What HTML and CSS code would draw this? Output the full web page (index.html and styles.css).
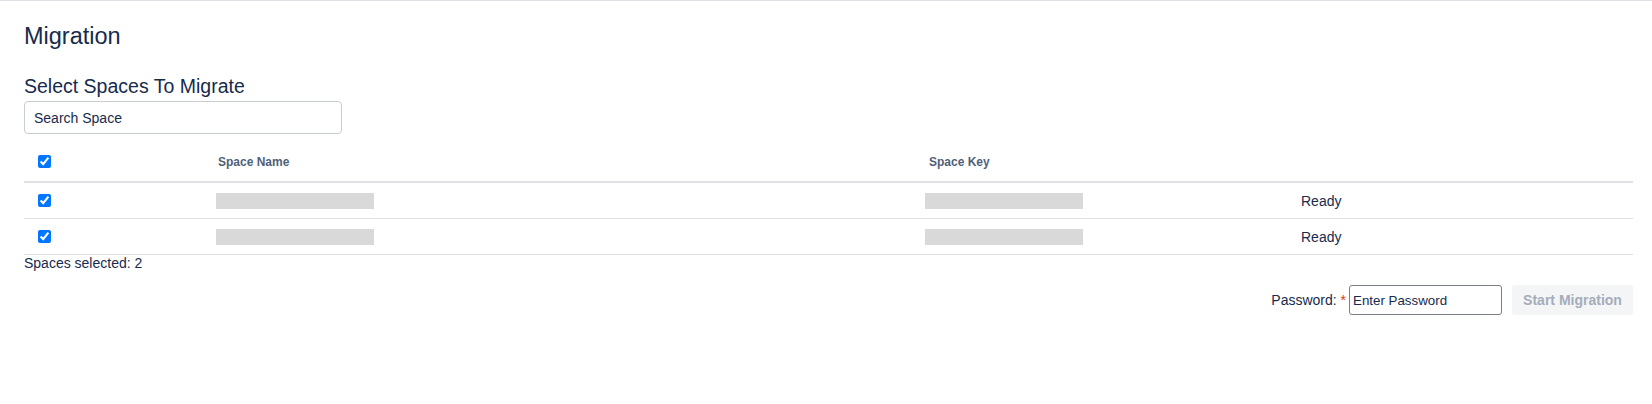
FILE: index.html
```html
<!DOCTYPE html>
<html lang="en">
<head>
<meta charset="utf-8">
<title>Migration</title>
<link rel="stylesheet" href="styles.css">
</head>
<body>
<div class="page">
  <h1 class="title">Migration</h1>
  <h2 class="subtitle">Select Spaces To Migrate</h2>
  <input class="search" type="text" placeholder="Search Space">
  <div class="table">
    <div class="row head">
      <div class="cell"><input class="cb" type="checkbox" checked></div>
      <div class="cell th th-name">Space Name</div>
      <div class="cell th th-key">Space Key</div>
      <div class="cell"></div>
    </div>
    <div class="row">
      <div class="cell"><input class="cb" type="checkbox" checked></div>
      <div class="cell"><span class="bar"></span></div>
      <div class="cell"><span class="bar"></span></div>
      <div class="cell status">Ready</div>
    </div>
    <div class="row">
      <div class="cell"><input class="cb" type="checkbox" checked></div>
      <div class="cell"><span class="bar"></span></div>
      <div class="cell"><span class="bar"></span></div>
      <div class="cell status">Ready</div>
    </div>
  </div>
  <div class="summary">Spaces selected: 2</div>
  <div class="actions">
    <label class="pw-label">Password: <span class="req">*</span></label>
    <input class="pw" type="password" placeholder="Enter Password">
    <button class="start" disabled>Start Migration</button>
  </div>
</div>
</body>
</html>
```
FILE: styles.css
```css
html, body {
  margin: 0;
  padding: 0;
  background: #ffffff;
}
body {
  font-family: "Liberation Sans", Arial, Helvetica, sans-serif;
  color: #172b4d;
  font-size: 14px;
}
.page {
  border-top: 1px solid #dfe1e6;
  padding: 21px 19px 0 24px;
}
.title {
  margin: 0;
  font-size: 23.5px;
  line-height: 28px;
  font-weight: normal;
  color: #172b4d;
}
.subtitle {
  margin: 25px 0 0;
  font-size: 19.5px;
  line-height: 23px;
  font-weight: normal;
  color: #172b4d;
}
.search {
  display: block;
  box-sizing: border-box;
  margin: 3px 0 0;
  width: 318px;
  height: 33px;
  padding: 0 9px;
  border: 1px solid #c8ccd3;
  border-radius: 4px;
  font-family: inherit;
  font-size: 14px;
  color: #172b4d;
  background: #fff;
  outline: none;
}
.search::placeholder {
  color: #172b4d;
  opacity: 1;
}
.table {
  margin-top: 8px;
}
.row {
  display: grid;
  grid-template-columns: 182px 709px 376px 1fr;
  height: 35px;
  border-bottom: 1px solid #dfe1e6;
  align-items: center;
}
.row.head {
  height: 39px;
  border-bottom: 2px solid #dfe1e6;
}
.cell {
  padding: 0 10px;
  display: flex;
  align-items: center;
  min-width: 0;
}
.cb {
  width: 13px;
  height: 13px;
  margin: -1px 0 0 4px;
}
.head .cb {
  margin-top: 0;
}
.th {
  font-size: 12px;
  font-weight: bold;
  color: #505f79;
}
.th-name {
  padding-left: 12px;
}
.th-key {
  padding-left: 14px;
}
.bar {
  display: block;
  width: 158px;
  height: 16px;
  background: #d9d9d9;
}
.status {
  font-size: 14px;
  color: #172b4d;
}
.summary {
  font-size: 14px;
  line-height: 16px;
  color: #172b4d;
}
.actions {
  margin-top: 14px;
  display: flex;
  justify-content: flex-end;
  align-items: center;
}
.pw-label {
  font-size: 14px;
  color: #172b4d;
  margin-right: 3px;
}
.req {
  color: #de350b;
}
.pw {
  box-sizing: border-box;
  width: 153px;
  height: 30px;
  padding: 0 3px;
  border: 1px solid #7a7f88;
  border-radius: 3px;
  font-family: inherit;
  font-size: 13.333px;
  color: #172b4d;
  background: #fff;
  outline: none;
}
.pw::placeholder {
  color: #172b4d;
  opacity: 1;
}
.start {
  margin-left: 10px;
  box-sizing: border-box;
  width: 121px;
  height: 30px;
  padding: 0;
  border: none;
  border-radius: 3px;
  background: #f4f5f7;
  color: #a5adba;
  font-family: inherit;
  font-size: 14px;
  font-weight: bold;
}
```
